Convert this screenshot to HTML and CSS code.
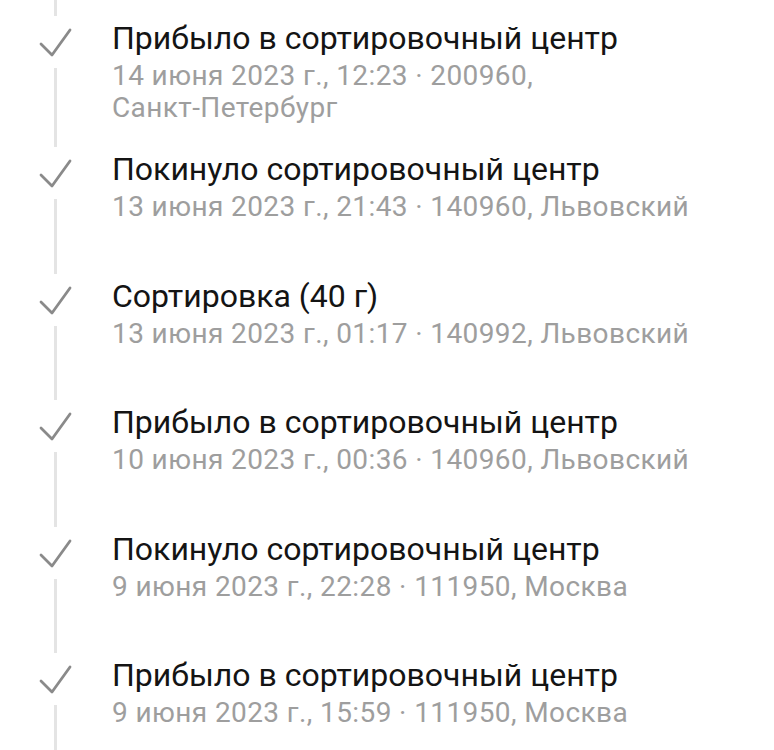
FILE: index.html
```html
<!DOCTYPE html>
<html lang="ru">
<head>
    <meta charset="UTF-8">
    <meta name="viewport" content="width=device-width, initial-scale=1.0">
    <title>Отслеживание</title>
    <link rel="stylesheet" href="styles.css">
</head>
<body>

<div class="timeline">
    <!-- tail of the previous step -->
    <div class="tail"><span class="rail"></span></div>

    <div class="step">
        <div class="marker">
            <svg class="check" viewBox="0 0 34 32" width="34" height="32"><path d="M3 17 L14 28 L32 3"/></svg>
            <span class="rail"></span>
        </div>
        <div class="info">
            <div class="title">Прибыло в сортировочный центр</div>
            <div class="meta">14 июня 2023 г., 12:23 · 200960,<br>Санкт-Петербург</div>
        </div>
    </div>

    <div class="step">
        <div class="marker">
            <svg class="check" viewBox="0 0 34 32" width="34" height="32"><path d="M3 17 L14 28 L32 3"/></svg>
            <span class="rail"></span>
        </div>
        <div class="info">
            <div class="title">Покинуло сортировочный центр</div>
            <div class="meta">13 июня 2023 г., 21:43 · 140960, Львовский</div>
        </div>
    </div>

    <div class="step">
        <div class="marker">
            <svg class="check" viewBox="0 0 34 32" width="34" height="32"><path d="M3 17 L14 28 L32 3"/></svg>
            <span class="rail"></span>
        </div>
        <div class="info">
            <div class="title">Сортировка (40 г)</div>
            <div class="meta">13 июня 2023 г., 01:17 · 140992, Львовский</div>
        </div>
    </div>

    <div class="step">
        <div class="marker">
            <svg class="check" viewBox="0 0 34 32" width="34" height="32"><path d="M3 17 L14 28 L32 3"/></svg>
            <span class="rail"></span>
        </div>
        <div class="info">
            <div class="title">Прибыло в сортировочный центр</div>
            <div class="meta">10 июня 2023 г., 00:36 · 140960, Львовский</div>
        </div>
    </div>

    <div class="step">
        <div class="marker">
            <svg class="check" viewBox="0 0 34 32" width="34" height="32"><path d="M3 17 L14 28 L32 3"/></svg>
            <span class="rail"></span>
        </div>
        <div class="info">
            <div class="title">Покинуло сортировочный центр</div>
            <div class="meta">9 июня 2023 г., 22:28 · 111950, Москва</div>
        </div>
    </div>

    <div class="step">
        <div class="marker">
            <svg class="check" viewBox="0 0 34 32" width="34" height="32"><path d="M3 17 L14 28 L32 3"/></svg>
            <span class="rail"></span>
        </div>
        <div class="info">
            <div class="title">Прибыло в сортировочный центр</div>
            <div class="meta">9 июня 2023 г., 15:59 · 111950, Москва</div>
        </div>
    </div>
</div>

</body>
</html>
```

FILE: styles.css
```css
body {
    font-family: Roboto, "Noto Sans", sans-serif;
    margin: 0;
    padding: 0;
    background-color: #ffffff;
    overflow: hidden;
}
.timeline {
    display: flex;
    flex-direction: column;
}
.tail {
    width: 110px;
    height: 22px;
    display: flex;
    flex-direction: column;
    align-items: center;
}
.tail .rail {
    flex: 1;
    margin-bottom: 6px;
}
.step {
    display: flex;
    min-height: 126.6px;
}
.marker {
    width: 110px;
    margin-right: 2px;
    display: flex;
    flex-direction: column;
    align-items: center;
    flex-shrink: 0;
}
.check {
    margin-top: 5px;
    fill: none;
    stroke: #8a8a8a;
    stroke-width: 2.8;
    stroke-linecap: round;
    stroke-linejoin: round;
}
.rail {
    display: block;
    width: 3px;
    flex: 1;
    margin-top: 9px;
    margin-bottom: 6px;
    background-color: #e4e4e4;
}
.tail .rail {
    margin-top: 0;
}
.info {
    padding-bottom: 29px;
}
.title {
    margin-top: -2px;
    font-size: 32px;
    line-height: 36px;
    color: #141414;
}
.meta {
    margin-top: 4px;
    font-size: 28px;
    line-height: 32px;
    letter-spacing: 0.4px;
    color: #9e9e9e;
}
```
